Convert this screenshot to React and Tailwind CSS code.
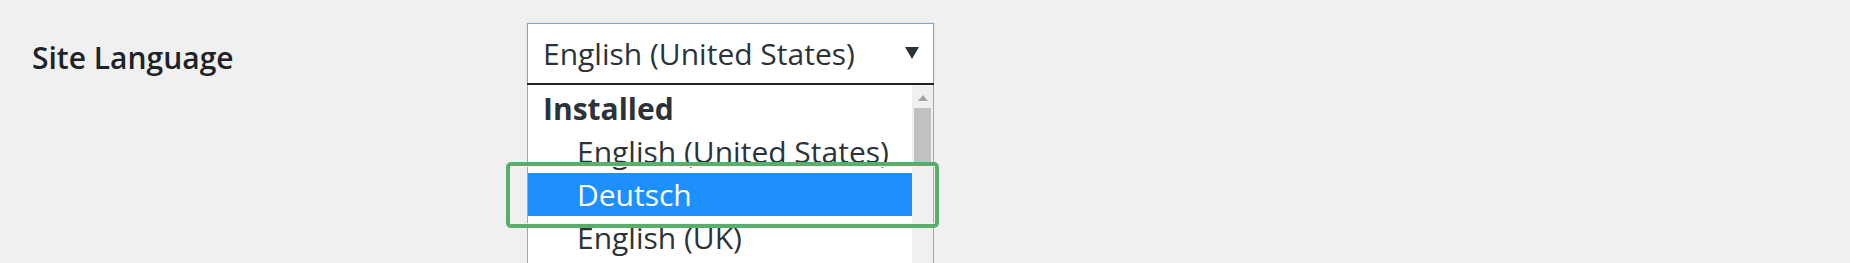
import React from 'react';

const options = [
  { label: 'Installed', group: true },
  { label: 'English (United States)' },
  { label: 'Deutsch', selected: true },
  { label: 'English (UK)' },
];

const App = () => {
  return (
    <div
      className="relative h-[263px] w-[1850px] overflow-hidden bg-[#f0f0f1] text-[#1d2327]"
      style={{ fontFamily: '"Open Sans", "Noto Sans", sans-serif' }}
    >
      <div className="flex">
        {/* label column */}
        <div className="w-[527px] pl-[32px] pt-[36px]">
          <label className="text-[30px] font-semibold leading-[44px]">Site Language</label>
        </div>

        {/* select + open list */}
        <div className="mt-[23px] w-[407px]">
          <div className="flex h-[60px] items-center justify-between border border-b-0 border-[#7aa7dc] bg-white pl-[15px] pr-[14px] shadow-[0_0_2px_#b9d3f0]">
            <span className="text-[30px] leading-none text-[#2c3338]">English (United States)</span>
            <svg width="14" height="12" viewBox="0 0 14 12" className="mb-[2px]">
              <path d="M0 0h14L7 12z" fill="#2c3338" />
            </svg>
          </div>
          <div className="h-[2px] bg-[#1d2327]" />
          <div className="flex h-[200px] border-x border-[#8fa9d6] bg-white">
            <ul className="flex-1 pt-[2px]">
              {options.map((o) => (
                <li
                  key={o.label}
                  className={
                    'flex h-[43px] items-center text-[30px] leading-none ' +
                    (o.group
                      ? 'pl-[15px] font-bold text-[#2c3338]'
                      : o.selected
                      ? 'bg-[#1e8fff] pl-[49px] text-white'
                      : 'pl-[49px] text-[#2c3338]')
                  }
                >
                  {o.label}
                </li>
              ))}
            </ul>
            {/* scrollbar */}
            <div className="flex w-[21px] flex-col items-center bg-[#f0f0f0] pt-[10px]">
              <svg width="10" height="6" viewBox="0 0 10 6">
                <path d="M0 6L5 0l5 6z" fill="#a3a3a3" />
              </svg>
              <div className="mt-[7px] h-[56px] w-[17px] bg-[#c1c1c1]" />
            </div>
          </div>
        </div>
      </div>

      {/* annotation highlight */}
      <div className="absolute left-[506px] top-[162px] h-[66px] w-[433px] rounded-[5px] border-[4px] border-[#5aae6b] shadow-[inset_0_0_0_1px_#eef6ef]" />
    </div>
  );
};

export default App;
